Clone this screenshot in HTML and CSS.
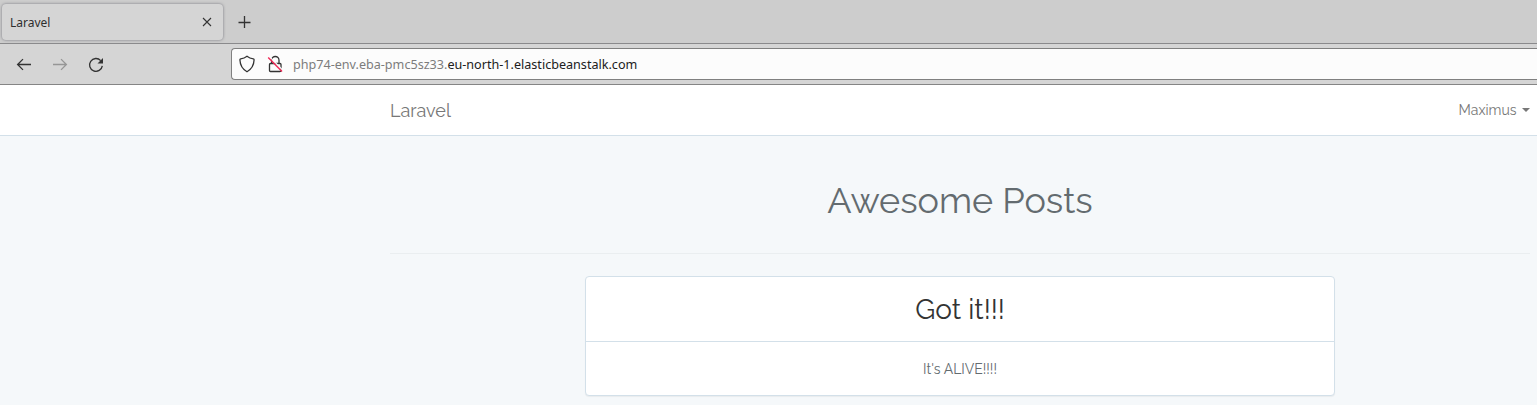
FILE: index.html
```html
<!DOCTYPE html>
<html lang="en">
<head>
<meta charset="utf-8">
<title>Laravel</title>
<link rel="stylesheet" href="styles.css">
</head>
<body>
<div class="tabs">
  <div class="tab"><span>Laravel</span>
    <svg class="close" width="10" height="10" viewBox="0 0 10 10"><path d="M1 1l8 8M9 1l-8 8"/></svg>
  </div>
  <svg class="plus" width="14" height="14" viewBox="0 0 14 14"><path d="M7.500 1v12M1.500 7.500h12"/></svg>
</div>
<div class="toolbar">
  <svg class="tool" width="16" height="16" viewBox="0 0 16 16"><path d="M15 8.500H1.800M7 3.100L1.600 8.500L7 13.900"/></svg>
  <svg class="tool disabled" width="16" height="16" viewBox="0 0 16 16"><path d="M1 8.500h13.200M9 3.100L14.400 8.500L9 13.900"/></svg>
  <svg class="tool" width="16" height="17" viewBox="0 0 16 17"><path d="M12.700 4.600A6.400 6.400 0 1 0 14.300 9.800"/><path class="fill" d="M15 2v5.400H9.500z"/></svg>
  <div class="address">
    <svg class="shield" width="16" height="18" viewBox="0 0 16 18"><path d="M8 1.300C6.200 2.800 4.200 3.600 1.700 3.800c-.6.100-.8.400-.8 1c.2 5.200 2.500 9.400 7.100 11.900c4.600-2.500 6.900-6.700 7.100-11.900c0-.6-.2-.9-.8-1C11.800 3.600 9.800 2.800 8 1.300z"/></svg>
    <svg class="lock" width="16" height="18" viewBox="0 0 16 18"><path d="M4.600 8V5.200a3.700 3.700 0 0 1 7.400 0v3.300M3.500 8.500h9.500a1 1 0 0 1 1 1v6a1 1 0 0 1-1 1H3.500a1 1 0 0 1-1-1V9.500a1 1 0 0 1 1-1"/><path class="gap" d="M2.400 1.600L15.800 15.200"/><path class="slash" d="M1.200 2.600L15 16.500"/></svg>
    <span class="url">php74-env.eba-pmc5sz33.<b>eu-north-1.elasticbeanstalk.com</b></span>
  </div>
</div>
<nav class="navbar">
  <div class="container nav-row">
    <a class="brand">Laravel</a>
    <a class="user"><span>Maximus</span><i class="caret"></i></a>
  </div>
</nav>
<main class="container">
  <h1>Awesome Posts</h1>
  <hr>
  <section class="card">
    <h2>Got it!!!</h2>
    <p>It's ALIVE!!!!</p>
  </section>
</main>
</body>
</html>
```
FILE: styles.css
```css
* { box-sizing: border-box; }
body {
  margin: 0;
  height: 405px;
  overflow: hidden;
  background: #f5f8fa;
  color: #636b6f;
  font-family: Raleway, Lato, sans-serif;
  font-size: 14px;
}
svg { display: block; flex: none; fill: none; stroke: #333; stroke-width: 1.3; }
.tabs {
  display: flex;
  align-items: center;
  height: 44px;
  padding: 0 0 0 2px;
  background: #cdcdcd;
  border-bottom: 1px solid #8a8a8c;
}
.tab {
  display: flex;
  align-items: center;
  justify-content: space-between;
  width: 221px;
  height: 36px;
  padding: 0 11px 0 8px;
  border-radius: 4px;
  background: #d5d5d5;
  box-shadow: 0 0 3px #77777f;
  color: #2e2e2e;
  font: 12px/18px "Noto Sans", sans-serif;
}
.tab span { padding-top: 2px; }
.close { stroke-width: 1.1; }
.plus { margin-left: 14px; }
.toolbar {
  display: flex;
  align-items: center;
  height: 41px;
  padding-left: 16px;
  background: #d5d5d5;
  border-bottom: 1px solid #858585;
}
.tool { margin-right: 20px; stroke-width: 1.3; }
.disabled { stroke: #969696; }
.fill { fill: #333; stroke: none; }
.address {
  display: flex;
  align-items: center;
  flex: 1;
  height: 32px;
  margin-left: 107px;
  padding-left: 7px;
  background: #fcfcfc;
  border: 1px solid #808080;
  border-right: 0;
  border-radius: 4px 0 0 4px;
}
.lock { margin: 0 10px 0 12px; }
.gap { stroke: #fcfcfc; stroke-width: 1.3; }
.slash { stroke: #f02855; stroke-width: 1.4; }
.url { color: #7c7c7c; font: 12.6px "Noto Sans", sans-serif; white-space: nowrap; }
.url b { color: #202020; font-weight: 400; }
.navbar { height: 51px; background: #fff; border-bottom: 1px solid #d3e0e9; }
.container { width: 1140px; margin: 0 0 0 390px; }
.nav-row { display: flex; align-items: center; justify-content: space-between; height: 50px; color: #777; }
.brand { font-size: 18px; }
.user { display: flex; align-items: center; }
.caret { margin-left: 5.5px; border: 4px solid transparent; border-top-color: #777; border-bottom: 0; }
h1 { margin: 0; padding-top: 44px; font-size: 36px; font-weight: 400; line-height: 40px; text-align: center; }
hr { height: 1px; margin: 33px 0 22px; border: 0; background: #eaeef0; }
.card {
  width: 750px;
  margin: 0 auto;
  background: #fff;
  border: 1px solid #d3e0e9;
  border-radius: 4px;
  box-shadow: 0 1px 1px rgba(0, 0, 0, .05);
  text-align: center;
}
h2 { height: 65px; margin: 0; color: #333; font-size: 28px; font-weight: 400; line-height: 66px; border-bottom: 1px solid #d3e0e9; }
.card p { height: 53px; margin: 0; line-height: 55px; }
```
